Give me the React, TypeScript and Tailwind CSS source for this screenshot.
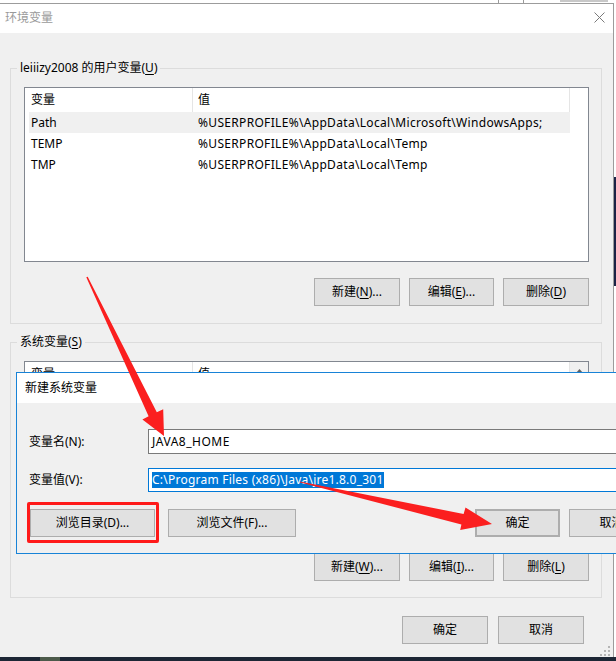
import React from "react";

function U({ children }: { children: React.ReactNode }) {
  return <span className="underline underline-offset-[2px]">{children}</span>;
}

function Btn({
  children,
  className = "",
}: {
  children: React.ReactNode;
  className?: string;
}) {
  return (
    <div
      className={
        "flex items-center justify-center h-[28px] border border-[#adadad] bg-[#e1e1e1] " +
        className
      }
    >
      {children}
    </div>
  );
}

function ListHeader({ scroll }: { scroll?: boolean }) {
  return (
    <div className="flex h-[24px] shrink-0">
      <div className="w-[168px] border-r border-[#e5e5e5] pl-[6px] flex items-center">变量</div>
      <div className="w-[377px] border-r border-[#e5e5e5] pl-[5px] flex items-center">值</div>
      <div className={"flex-1 " + (scroll ? "bg-[#f0f0f0] flex items-start justify-center pt-[6px]" : "")}>
        {scroll ? (
          <svg width="9" height="6" viewBox="0 0 9 6">
            <path d="M0.5 5.5 L4.5 1 L8.5 5.5 Z" fill="#606060" />
          </svg>
        ) : null}
      </div>
    </div>
  );
}

function Row({ name, value, hl }: { name: string; value: string; hl?: boolean }) {
  return (
    <div className={"flex h-[21px] items-center ml-[4px] w-[541px] " + (hl ? "bg-[#f0f0f0]" : "")}>
      <div className="w-[169px] pl-[2px]">{name}</div>
      <div className="whitespace-nowrap tracking-[0.32px]">{value}</div>
    </div>
  );
}

export default function App() {
  return (
    <div className="relative w-[616px] h-[661px] overflow-hidden bg-white text-[12px] leading-[16px] text-black font-['Noto_Sans','Noto_Sans_CJK_SC',sans-serif]">
      {/* strip of the window behind */}
      <div className="h-[3px] bg-white flex">
        <div className="ml-[498px] w-px h-[3px] bg-[#9a9a9a]" />
        <div className="ml-[24px] w-px h-[3px] bg-[#9a9a9a]" />
        <div className="ml-[36px] w-[48px] h-[2px] bg-[#c8c8c8]" />
      </div>

      <div className="flex h-[654px]">
        {/* main dialog */}
        <div className="relative w-[614px] border-t border-r border-[#9c9c9c] flex flex-col">
          <div className="h-[29px] bg-white flex items-center justify-between pl-[5px] pr-[8px]">
            <span className="text-[#9a9a9a] -mt-[2px]">环境变量</span>
            <svg width="11" height="11" viewBox="0 0 11 11" className="-mt-[2px]">
              <path d="M0.5 0.5 L10.5 10.5 M10.5 0.5 L0.5 10.5" stroke="#7a7a7a" strokeWidth="1" />
            </svg>
          </div>
          <div className="flex-1 bg-[#f0f0f0] pl-[10px] pr-[11px] pt-[35px]">
            {/* user variables */}
            <div className="relative border border-[#dcdcdc] pl-[13px] pr-[12px] pt-[18px] pb-[17px]">
              <div className="absolute left-[6px] top-[-9px] px-[3px] bg-[#f0f0f0] leading-[16px]">
                leiiizy2008 的用户变量(<U>U</U>)
              </div>
              <div className="h-[175px] border border-[#828790] bg-white flex flex-col">
                <ListHeader />
                <Row name="Path" value="%USERPROFILE%\AppData\Local\Microsoft\WindowsApps;" hl />
                <Row name="TEMP" value="%USERPROFILE%\AppData\Local\Temp" />
                <Row name="TMP" value="%USERPROFILE%\AppData\Local\Temp" />
              </div>
              <div className="mt-[16px] flex justify-end gap-[9px]">
                <Btn className="w-[86px]">
                  新建(<U>N</U>)...
                </Btn>
                <Btn className="w-[85px]">
                  编辑(<U>E</U>)...
                </Btn>
                <Btn className="w-[86px]">
                  删除(<U>D</U>)
                </Btn>
              </div>
            </div>

            {/* system variables */}
            <div className="relative mt-[18px] border border-[#dcdcdc] pl-[13px] pr-[12px] pt-[18px] pb-[16px]">
              <div className="absolute left-[6px] top-[-9px] px-[3px] bg-[#f0f0f0] leading-[16px]">
                系统变量(<U>S</U>)
              </div>
              <div className="h-[176px] border border-[#828790] bg-white flex flex-col">
                <ListHeader scroll />
              </div>
              <div className="mt-[16px] flex justify-end gap-[9px]">
                <Btn className="w-[86px]">
                  新建(<U>W</U>)...
                </Btn>
                <Btn className="w-[85px]">
                  编辑(<U>I</U>)...
                </Btn>
                <Btn className="w-[86px]">
                  删除(<U>L</U>)
                </Btn>
              </div>
            </div>

            <div className="mt-[18px] flex justify-end gap-[10px] pr-[18px]">
              <Btn className="w-[86px] h-[27px]">确定</Btn>
              <Btn className="w-[86px] h-[27px]">取消</Btn>
            </div>
          </div>
          {/* resize grip */}
          <svg className="absolute right-[3px] bottom-[1px]" width="10" height="10" viewBox="0 0 10 10">
            <rect x="8" y="0" width="2" height="2" fill="#b5b5b5" />
            <rect x="4" y="4" width="2" height="2" fill="#b5b5b5" />
            <rect x="8" y="4" width="2" height="2" fill="#b5b5b5" />
            <rect x="0" y="8" width="2" height="2" fill="#b5b5b5" />
            <rect x="4" y="8" width="2" height="2" fill="#b5b5b5" />
            <rect x="8" y="8" width="2" height="2" fill="#b5b5b5" />
          </svg>
        </div>
        {/* sliver of window behind, right side */}
        <div className="flex-1 bg-white flex flex-col">
          <div className="h-[174px]" />
          <div className="h-[109px] bg-[#1b2346]" />
        </div>
      </div>

      {/* taskbar */}
      <div className="h-[4px] bg-[#1d2735] flex">
        <div className="ml-[40px] w-[20px] h-[4px] bg-[#4c5a4a]" />
      </div>

      {/* new system variable dialog */}
      <div className="absolute left-[16px] top-[372px] w-[640px] border border-[#1883d7] flex flex-col">
        <div className="h-[30px] bg-white flex items-center pl-[8px]">新建系统变量</div>
        <div className="h-[150px] bg-[#f0f0f0] pl-[12px] pt-[26px]">
          <div className="flex items-center h-[25px]">
            <div className="w-[119px]">变量名(N):</div>
            <div className="w-[480px] h-[25px] border border-[#7a7a7a] bg-white pl-[3px] flex items-center tracking-[0.5px]">
              JAVA8_HOME
            </div>
          </div>
          <div className="flex items-center h-[24px] mt-[14px]">
            <div className="w-[119px]">变量值(V):</div>
            <div className="w-[480px] h-[24px] border border-[#0078d7] bg-white pl-[3px] flex items-center">
              <span className="bg-[#0078d7] text-white h-[16px] leading-[16px] whitespace-nowrap tracking-[0.23px]">
                C:\Program Files (x86)\Java\jre1.8.0_301
              </span>
            </div>
          </div>
          <div className="flex mt-[17px]">
            <Btn className="ml-[1px] w-[125px]">浏览目录(D)...</Btn>
            <Btn className="ml-[13px] w-[128px]">浏览文件(F)...</Btn>
            <Btn className="ml-[179px] w-[85px] border-2 border-[#0078d7]">确定</Btn>
            <Btn className="ml-[9px] w-[85px]">取消</Btn>
          </div>
        </div>
      </div>

      {/* red highlight box */}
      <div className="absolute left-[27px] top-[502px] w-[132px] h-[41px] border-[3px] border-[#ff1a1a] rounded-[2px]" />

      {/* red arrows */}
      <svg className="absolute left-0 top-0 pointer-events-none" width="616" height="661" viewBox="0 0 616 661">
        <polygon
          points="86.3,277.3 87.7,276.7 156.8,412.2 163.2,409.2 164,436 142.4,419.4 148.6,416.2"
          fill="#fb1f1f"
        />
        <polygon
          points="299.7,481.4 300.3,482.6 461.4,524.4 460.2,530 492,524 465.5,507.5 463.6,514"
          fill="#fb1f1f"
        />
      </svg>
    </div>
  );
}
